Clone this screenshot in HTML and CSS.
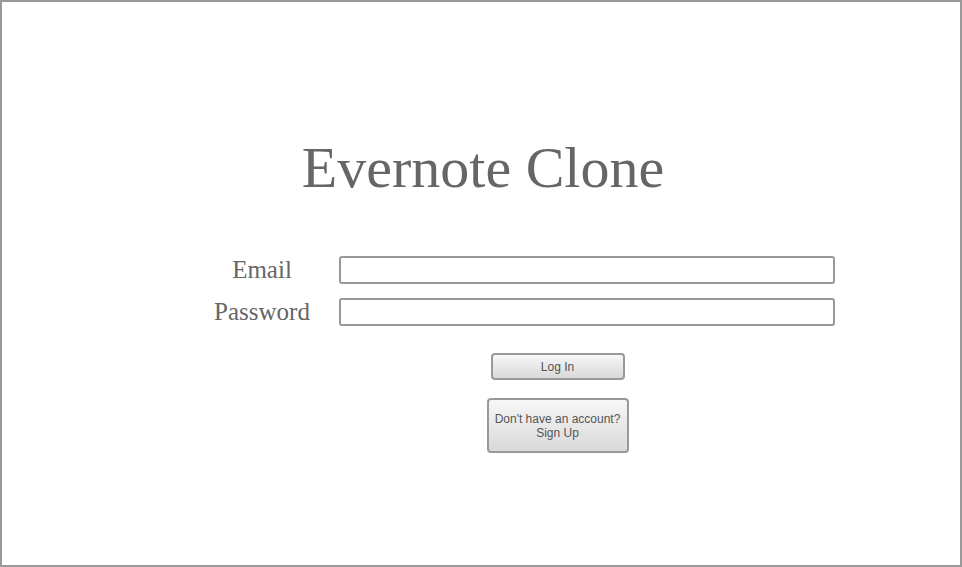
FILE: index.html
```html
<!DOCTYPE html>
<html lang="en">
<head>
<meta charset="utf-8">
<title>Evernote Clone</title>
<link rel="stylesheet" href="styles.css">
</head>
<body>
<div class="frame">
  <h1 class="title">Evernote Clone</h1>
  <form class="login-form">
    <div class="fields">
      <label class="field-label" for="email">Email</label>
      <input class="field-input" id="email" type="text">
      <label class="field-label" for="password">Password</label>
      <input class="field-input" id="password" type="password">
    </div>
    <div class="actions">
      <button class="btn btn-login" type="button">Log In</button>
      <button class="btn btn-signup" type="button">Don't have an account?<br>Sign Up</button>
    </div>
  </form>
</div>
</body>
</html>
```

FILE: styles.css
```css
html, body {
  margin: 0;
  padding: 0;
  height: 100%;
  background: #fff;
}

.frame {
  box-sizing: border-box;
  height: 100vh;
  border: 2px solid #9a9a9a;
  font-family: "Liberation Serif", "Times New Roman", serif;
  color: #666;
}

.title {
  margin: 137px 0 0;
  font-weight: normal;
  font-size: 58px;
  line-height: 1;
  text-align: center;
  color: #666;
  padding-left: 4px;
}

.login-form {
  margin: 59px 0 0;
}

.fields {
  display: grid;
  grid-template-columns: 124px 496px;
  column-gap: 15px;
  row-gap: 14px;
  margin-left: 198px;
}

.field-label {
  align-self: start;
  text-align: center;
  font-size: 25px;
  line-height: 28px;
  color: #666;
}

.field-input {
  box-sizing: border-box;
  width: 496px;
  height: 28px;
  margin: 0;
  border: 2px solid #999;
  border-radius: 3px;
  background: #fff;
  outline: none;
}

.actions {
  display: flex;
  flex-direction: column;
  align-items: center;
  gap: 18px;
  margin: 27px 0 0 412px;
  width: 287px;
}

.btn {
  box-sizing: border-box;
  margin: 0;
  padding: 0;
  border: 2px solid #999;
  border-radius: 4px;
  background: linear-gradient(to bottom, #f7f7f7, #d9d9d9);
  font-family: "Liberation Sans", Arial, Helvetica, sans-serif;
  font-size: 12px;
  line-height: 14px;
  color: #555;
}

.btn-login {
  width: 134px;
  height: 27px;
}

.btn-signup {
  width: 142px;
  height: 55px;
}
```
